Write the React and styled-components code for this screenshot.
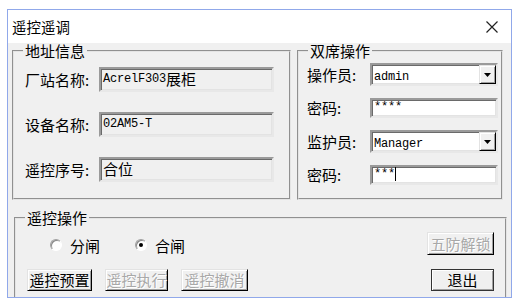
import React from 'react';
import styled, { createGlobalStyle } from 'styled-components';

const GlobalStyle = createGlobalStyle`
  body {
    margin: 0;
    background: #fff;
    font-family: "Noto Sans CJK SC", "Liberation Sans", sans-serif;
    color: #000;
  }
`;

const Window = styled.div`
  box-sizing: border-box;
  width: 505px;
  height: 289px;
  margin: 9px 0 0 7px;
  border: 1px solid #90a8ea;
  background: #f0f0f0;
  display: flex;
  flex-direction: column;
  overflow: hidden;
`;

const TitleBar = styled.div`
  height: 33px;
  flex: none;
  background: #fff;
  display: flex;
  align-items: center;
  justify-content: space-between;
  padding: 0 13px 0 4px;
  font-size: 14.5px;
`;

const Body = styled.div`
  display: flex;
  flex-direction: column;
`;

const TopRow = styled.div`
  display: flex;
  gap: 6px;
  padding-left: 4px;
`;

const Group = styled.fieldset`
  box-sizing: border-box;
  margin: 0;
  margin-left: ${p => p.$ml || 0}px;
  padding: 0;
  width: ${p => p.$w}px;
  height: ${p => p.$h}px;
  flex: none;
  border: 2px groove #e4e4e4;
  min-width: 0;
`;

const Legend = styled.legend`
  margin-left: 9px;
  padding: 0 2px;
  font-size: 15px;
  line-height: 16px;
`;

const FieldList = styled.div`
  display: flex;
  flex-direction: column;
  gap: ${p => p.$gap}px;
  padding: ${p => p.$pad};
`;

const Row = styled.div`
  display: flex;
  align-items: center;
`;

const Label = styled.span`
  width: ${p => p.$w}px;
  flex: none;
  font-size: 15px;
  line-height: 18px;
  white-space: nowrap;
`;

const Sunken = styled.div`
  box-sizing: border-box;
  width: ${p => p.$w}px;
  height: ${p => p.$h}px;
  border: 2px solid;
  border-color: #9a9a9a #e8e8e8 #e8e8e8 #9a9a9a;
  box-shadow: inset 1px 1px 0 #6a6a6a, inset -1px -1px 0 #e3e3e3;
  background: ${p => (p.$ro ? '#f0f0f0' : '#fff')};
  display: flex;
  align-items: center;
  padding-left: 2px;
  padding-bottom: 2px;
  font-size: 15px;
  white-space: nowrap;
  overflow: hidden;
`;

const Mono = styled.span`
  font-family: "Liberation Mono", "DejaVu Sans Mono", monospace;
  font-size: 12px;
  letter-spacing: -0.2px;
`;

const Caret = styled.span`
  display: inline-block;
  width: 1px;
  height: 14px;
  background: #000;
  vertical-align: middle;
`;

const SelectValue = styled.span`
  flex: 1;
`;

const ArrowBtn = styled.span`
  box-sizing: border-box;
  width: 17px;
  height: 19px;
  margin: 0 0 -2px 0;
  align-self: center;
  border: 1px solid;
  border-color: #e3e3e3 #000 #000 #e3e3e3;
  box-shadow: inset 1px 1px 0 #fff, inset -1px -1px 0 #a0a0a0;
  background: #f0f0f0;
  display: flex;
  align-items: center;
  justify-content: center;
`;

const ControlRow = styled.div`
  display: flex;
  align-items: center;
  justify-content: space-between;
  height: ${p => p.$h}px;
`;

const Radios = styled.div`
  display: flex;
  align-items: center;
  padding-left: 23px;
  margin-top: 3px;
`;

const Radio = styled.label`
  display: flex;
  align-items: center;
  gap: 8px;
  font-size: 15px;
  margin-right: ${p => p.$mr || 0}px;
`;

const RadioDot = styled.span`
  box-sizing: border-box;
  width: 12px;
  height: 12px;
  border-radius: 50%;
  border: 1px solid;
  border-color: #a0a0a0 #fff #fff #a0a0a0;
  box-shadow: inset 1px 1px 0 #8a8a8a;
  background: #fff;
  display: flex;
  align-items: center;
  justify-content: center;

  &::after {
    content: '';
    width: 4px;
    height: 4px;
    border-radius: 50%;
    background: ${p => (p.$on ? '#000' : 'transparent')};
  }
`;

const Buttons = styled.div`
  display: flex;
  gap: 13px;
`;

const Button = styled.button`
  box-sizing: border-box;
  width: ${p => p.$w}px;
  height: ${p => p.$h || 22}px;
  padding: 0;
  font-family: inherit;
  font-size: 15px;
  line-height: 16px;
  background: #f0f0f0;
  border: 1px solid;
  border-color: #e3e3e3 #000 #000 #e3e3e3;
  box-shadow: inset 1px 1px 0 #fff, inset -1px -1px 0 #a0a0a0;
  color: #000;
  outline: ${p => (p.$default ? '1px solid #333' : 'none')};
  outline-offset: -1px;

  &:disabled {
    color: #a8a8a8;
    text-shadow: 1px 1px 0 #fff;
  }
`;

const CloseIcon = () => (
  <svg width="12" height="12" viewBox="0 0 12 12">
    <path d="M0.5 0.5 L11.5 11.5 M11.5 0.5 L0.5 11.5" stroke="#222" strokeWidth="1.2" />
  </svg>
);

const DownArrow = () => (
  <svg width="7" height="4" viewBox="0 0 7 4">
    <path d="M0 0 H7 L3.5 4 Z" fill="#000" />
  </svg>
);

const Select = ({ value }) => (
  <Sunken $w={128} $h={23}>
    <SelectValue><Mono>{value}</Mono></SelectValue>
    <ArrowBtn><DownArrow /></ArrowBtn>
  </Sunken>
);

const addressRows = [
  { label: '厂站名称:', value: <><Mono>AcrelF303</Mono>展柜</> },
  { label: '设备名称:', value: <Mono>02AM5-T</Mono> },
  { label: '遥控序号:', value: '合位' },
];

export default function App() {
  return (
    <>
      <GlobalStyle />
      <Window>
        <TitleBar>
          <span>遥控遥调</span>
          <CloseIcon />
        </TitleBar>
        <Body>
          <TopRow>
            <Group $w={279} $h={157}>
              <Legend>地址信息</Legend>
              <FieldList $gap={20} $pad="8px 15px 0 11px">
                {addressRows.map(r => (
                  <Row key={r.label}>
                    <Label $w={74}>{r.label}</Label>
                    <Sunken $ro $w={175} $h={25}>{r.value}</Sunken>
                  </Row>
                ))}
              </FieldList>
            </Group>
            <Group $w={206} $h={157}>
              <Legend>双席操作</Legend>
              <FieldList $gap={12} $pad="4px 2px 0 8px">
                <Row>
                  <Label $w={63}>操作员:</Label>
                  <Select value="admin" />
                </Row>
                <Row>
                  <Label $w={63}>密码:</Label>
                  <Sunken $w={128} $h={20}><Mono>****</Mono></Sunken>
                </Row>
                <Row>
                  <Label $w={63}>监护员:</Label>
                  <Select value="Manager" />
                </Row>
                <Row>
                  <Label $w={63}>密码:</Label>
                  <Sunken $w={128} $h={20}><Mono>***</Mono><Caret /></Sunken>
                </Row>
              </FieldList>
            </Group>
          </TopRow>
          <Group $w={493} $h={110} $ml={6} style={{ marginTop: 10 }}>
            <Legend>遥控操作</Legend>
            <FieldList $gap={14} $pad="6px 11px 0 11px">
              <ControlRow $h={23}>
                <Radios>
                  <Radio $mr={35}><RadioDot />分闸</Radio>
                  <Radio><RadioDot $on />合闸</Radio>
                </Radios>
                <Button $w={67} $h={23} disabled>五防解锁</Button>
              </ControlRow>
              <ControlRow $h={22}>
                <Buttons>
                  <Button $w={65}>遥控预置</Button>
                  <Button $w={63} disabled>遥控执行</Button>
                  <Button $w={67} disabled>遥控撤消</Button>
                </Buttons>
                <Button $w={63} $default>退出</Button>
              </ControlRow>
            </FieldList>
          </Group>
        </Body>
      </Window>
    </>
  );
}
